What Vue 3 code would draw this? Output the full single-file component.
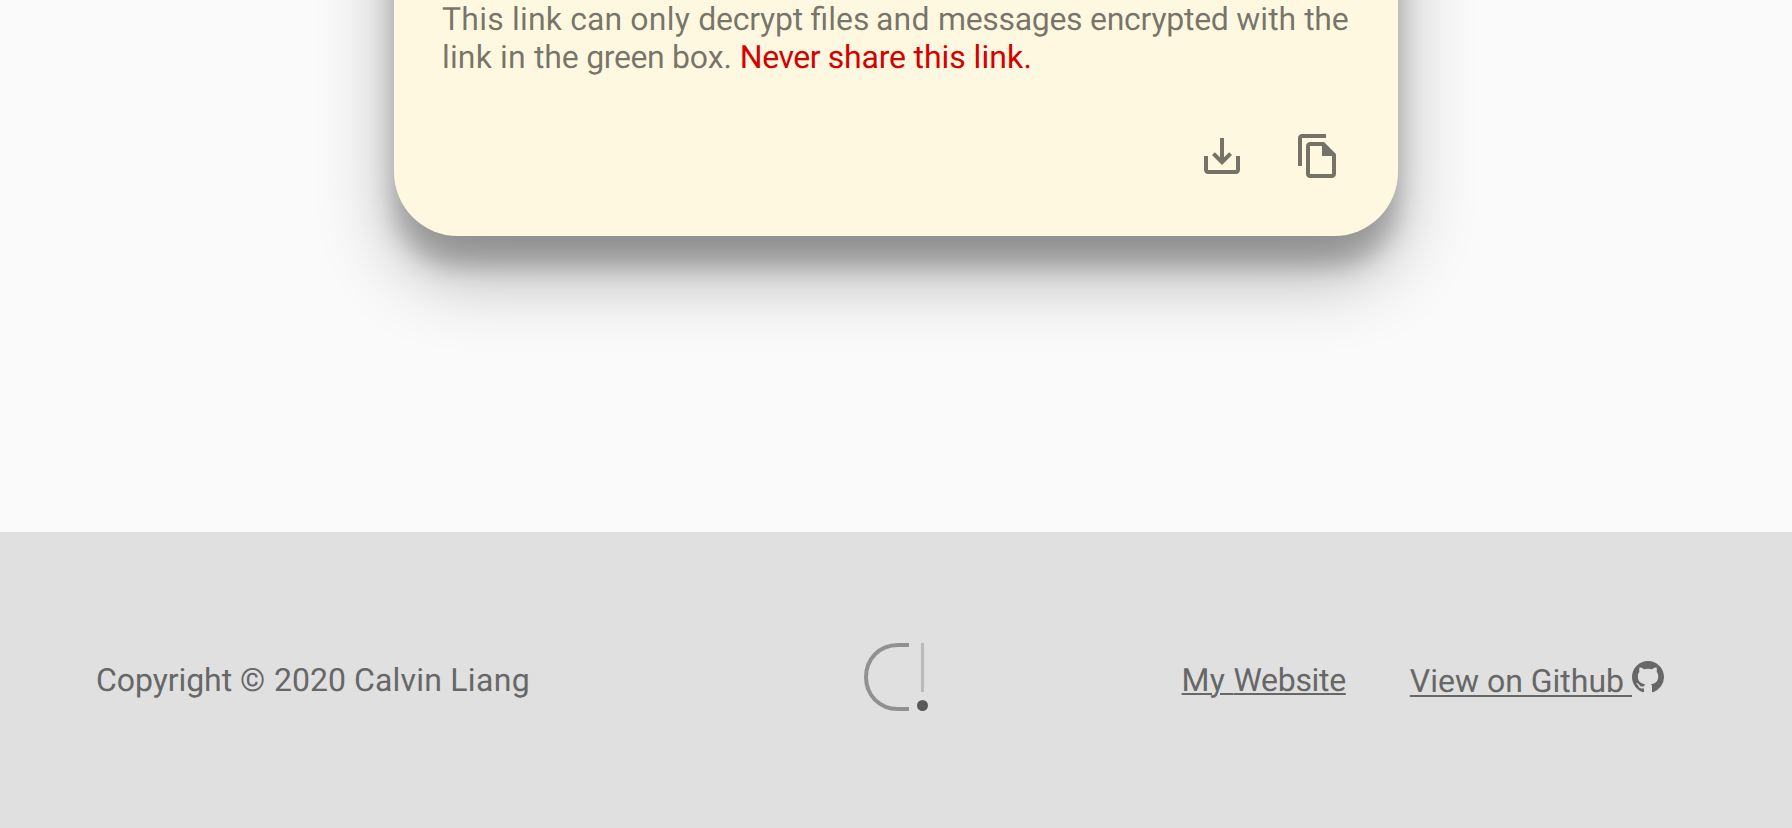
<script setup>
// Each run is [text, letter spacing in px, word spacing in px].
const message = [
  ['This ', 0.22], ['link ', 0.14], ['can ', 0.07], ['only ', 0.25], ['decrypt ', -0.26],
  ['files ', 0, -1.5], ['and ', 0.2], ['messages ', -0.31], ['encrypted ', -0.27], ['with ', 0],
  ['the ', -0.3], ['link ', 0.14], ['in ', 0.2], ['the ', -0.24], ['green ', -0.38], ['box. ', -0.06],
]
const warning = [['Never ', -0.45], ['share ', -0.2], ['this ', -0.06], ['link.', 0.1]]
const copyright = [['Copyright ', -0.07], ['© ', 0.45], ['2020 ', 0.04], ['Calvin ', 0.17], ['Liang', 0.4]]
const website = [['My ', 0.3], ['Website', -0.33]]
const tracking = (letter, word) => ({
  letterSpacing: letter ? `${letter}px` : null,
  wordSpacing: word ? `${word}px` : null,
})
</script>

<template>
  <div class="page">
    <main class="content">
      <section class="card">
        <p class="message"><span v-for="([text, letter, word], i) in message" :key="i" :style="tracking(letter, word)">{{ text }}</span><span v-for="([text, letter], i) in warning" :key="'w' + i" class="warning" :style="tracking(letter)">{{ text }}</span></p>
        <div class="actions">
          <button class="action" aria-label="Download">
            <svg viewBox="0 0 24 24"><path d="M19 12v7H5v-7H3v7c0 1.1.9 2 2 2h14c1.1 0 2-.9 2-2v-7h-2zm-6 .67l2.59-2.58L17 11.5l-5 5-5-5 1.41-1.41L11 12.67V3h2z" /></svg>
          </button>
          <button class="action" aria-label="Copy">
            <svg viewBox="0 0 24 24"><path d="M16 1H4c-1.1 0-2 .9-2 2v14h2V3h12V1zm-1 4H8c-1.1 0-1.99.9-1.99 2L6 21c0 1.1.89 2 1.99 2H19c1.1 0 2-.9 2-2V11l-6-6zM8 21V7h6v5h5v9H8z" /></svg>
          </button>
        </div>
      </section>
    </main>
    <footer class="footer">
      <span class="copyright"><span v-for="([text, letter], i) in copyright" :key="i" :style="tracking(letter)">{{ text }}</span></span>
      <svg class="logo" viewBox="0 0 64 68" fill="none">
        <path d="M45 2H34C15 2 2 16.500 2 34S15 66 34 66H45" stroke="#919191" stroke-width="4" />
        <path d="M58.500 0V49" stroke="#bababa" stroke-width="3" />
        <circle cx="58.500" cy="62.500" r="5.500" fill="#595959" />
      </svg>
      <nav class="links">
        <a class="link" href="#"><span v-for="([text, letter], i) in website" :key="i" :style="tracking(letter)">{{ text }}</span></a>
        <a class="link github" href="#"><span class="label">View on Github&nbsp;</span><svg class="mark" viewBox="0 0 16 16"><path d="M8 0C3.580 0 0 3.580 0 8c0 3.540 2.290 6.530 5.470 7.590.4.070.55-.17.55-.38 0-.19-.010-.82-.010-1.490-2.010.37-2.530-.49-2.690-.94-.090-.23-.48-.94-.82-1.130-.28-.15-.68-.52-.010-.53.63-.010 1.080.58 1.230.82.72 1.210 1.870.87 2.330.66.070-.52.28-.87.51-1.070-1.780-.2-3.640-.89-3.640-3.950 0-.87.31-1.590.82-2.150-.080-.2-.36-1.020.080-2.120 0 0 .67-.21 2.200.82.64-.18 1.320-.27 2-.27s1.360.090 2 .27c1.530-1.040 2.200-.82 2.200-.82.44 1.100.16 1.920.080 2.120.51.56.82 1.270.82 2.150 0 3.070-1.870 3.750-3.650 3.950.29.25.54.73.54 1.480 0 1.070-.010 1.930-.010 2.200 0 .21.15.46.55.38A8.010 8.010 0 0 0 16 8c0-4.420-3.580-8-8-8z" /></svg></a>
      </nav>
    </footer>
  </div>
</template>

<style>
body {
  margin: 0;
}
</style>

<style scoped>
.page {
  height: 828px;
  display: flex;
  flex-direction: column;
  overflow: hidden;
  background: #fafafa;
  font-family: Roboto, "Liberation Sans", sans-serif;
  font-size: 32px;
  text-rendering: geometricPrecision;
}
.content {
  box-sizing: border-box;
  height: 532px;
  padding-bottom: 296px;
  display: flex;
  justify-content: center;
  align-items: flex-end;
}
.card {
  box-sizing: border-box;
  width: 1004px;
  height: 500px;
  padding: 0 48px 56px;
  display: flex;
  flex-direction: column;
  justify-content: flex-end;
  border-radius: 64px;
  background: #fff8e1;
  box-shadow: 0 38px 76px rgba(0, 0, 0, 0.3), 0 30px 24px rgba(0, 0, 0, 0.22);
}
.message {
  margin: 0 -12px 0 0;
  line-height: 38px;
  white-space: pre-wrap;
  color: rgba(0, 0, 0, 0.54);
}
.warning {
  color: #d50000;
}
.actions {
  display: flex;
  justify-content: flex-end;
  gap: 48px;
  margin-top: 56px;
  padding-right: 8px;
}
.action {
  width: 48px;
  height: 48px;
  padding: 0;
  border: 0;
  background: none;
}
.action svg {
  display: block;
  fill: rgba(0, 0, 0, 0.54);
}
.footer {
  position: relative;
  z-index: 1;
  box-sizing: border-box;
  height: 296px;
  padding: 0 128px 6px 96px;
  display: grid;
  grid-template-columns: 768px 64px 1fr;
  align-items: center;
  background: #e0e0e0;
  color: #676767;
}
.copyright {
  padding-top: 6px;
  white-space: pre-wrap;
}
.logo {
  width: 64px;
  height: 68px;
}
.links {
  display: flex;
  justify-content: flex-end;
  align-items: center;
  gap: 64px;
}
.link {
  padding-top: 6px;
  color: #676767;
  white-space: pre;
  text-decoration: underline 2px;
  text-underline-offset: 2px;
}
.github {
  display: flex;
  align-items: center;
  padding-top: 0;
  text-decoration: none;
}
.label {
  padding-top: 8px;
  text-decoration: underline 2px;
  text-underline-offset: 3px;
}
.mark {
  width: 32px;
  height: 32px;
  fill: #676767;
}
</style>
